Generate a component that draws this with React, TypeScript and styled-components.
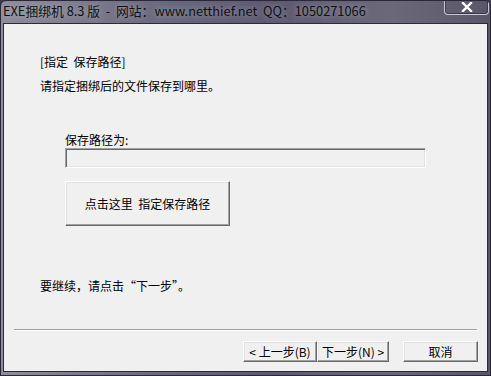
import React from "react";
import styled, { createGlobalStyle } from "styled-components";

const GlobalStyle = createGlobalStyle`
  html, body {
    margin: 0;
    padding: 0;
    background: #3c3a4c;
  }
  body {
    font-family: "Noto Sans CJK SC", "DejaVu Sans", sans-serif;
    font-size: 12px;
    color: #000;
  }
`;

// Aero-like outer window frame
const Window = styled.div`
  width: 491px;
  height: 376px;
  box-sizing: border-box;
  display: flex;
  flex-direction: column;
  background: linear-gradient(90deg, #8f8d99 0%, #6f6d80 28%, #5d5a70 55%, #6b6979 80%, #585668 100%);
  border: 1px solid #2a2838;
  border-radius: 6px 6px 0 0;
  overflow: hidden;
`;

const TitleBar = styled.div`
  height: 22px;
  flex: none;
  display: flex;
  align-items: flex-start;
  padding-left: 2px;
`;

const Title = styled.span`
  font-family: "Noto Sans CJK SC", "Open Sans", sans-serif;
  font-size: 12.8px;
  line-height: 20px;
  color: #111;
  white-space: pre;
  text-shadow: 0 0 6px rgba(230, 230, 240, 0.55);
`;

const CloseButton = styled.div`
  margin-left: auto;
  margin-right: 1px;
  margin-top: -2px;
  width: 45px;
  height: 16px;
  box-sizing: border-box;
  border: 1px solid #c8c6d2;
  border-top: none;
  border-radius: 0 0 4px 4px;
  box-shadow: inset 0 0 0 1px rgba(40, 38, 55, 0.6);
  display: flex;
  align-items: center;
  justify-content: center;
`;

const Client = styled.div`
  flex: 1;
  margin: 0 2px 3px 2px;
  background: #f0f0f0;
  border: 1px solid #2c2a3a;
  display: flex;
  flex-direction: column;
`;

const Content = styled.div`
  display: flex;
  flex-direction: column;
  padding-left: 36px;
`;

const Line = styled.div<{ $top: number }>`
  margin-top: ${(p) => p.$top}px;
  line-height: 16px;
  height: 16px;
  white-space: pre;
`;

const PathGroup = styled.div`
  margin-left: 25px;
  display: flex;
  flex-direction: column;
`;

const PathInput = styled.div`
  width: 361px;
  height: 20px;
  box-sizing: border-box;
  background: #f0f0f0;
  border-top: 1px solid #a0a0a0;
  border-left: 1px solid #a0a0a0;
  border-right: 1px solid #ffffff;
  border-bottom: 1px solid #ffffff;
  box-shadow: inset 1px 1px 0 #696969, inset -1px -1px 0 #e3e3e3;
`;

const BigButton = styled.div`
  margin-top: 13px;
  width: 165px;
  height: 45px;
  box-sizing: border-box;
  background: #f0f0f0;
  border-top: 1px solid #ffffff;
  border-left: 1px solid #ffffff;
  border-right: 1px solid #696969;
  border-bottom: 1px solid #696969;
  box-shadow: inset -1px -1px 0 #a0a0a0, inset 1px 1px 0 #e3e3e3;
  display: flex;
  align-items: center;
  justify-content: center;
  white-space: pre;
`;

const Separator = styled.div`
  margin: 35px 10px 0 10px;
  height: 1px;
  background: #a0a0a0;
  border-bottom: 1px solid #ffffff;
`;

const ButtonRow = styled.div`
  display: flex;
  justify-content: flex-end;
  padding: 10px 9px 0 0;
`;

const NavButton = styled.div<{ $w: number; $gap?: number }>`
  width: ${(p) => p.$w}px;
  height: 21px;
  margin-left: ${(p) => p.$gap ?? 0}px;
  box-sizing: border-box;
  background: #f0f0f0;
  border-top: 1px solid #ffffff;
  border-left: 1px solid #ffffff;
  border-right: 1px solid #696969;
  border-bottom: 1px solid #696969;
  box-shadow: inset -1px -1px 0 #a0a0a0, inset 1px 1px 0 #e3e3e3;
  display: flex;
  align-items: center;
  justify-content: center;
  line-height: 14px;
  white-space: pre;
`;

const App: React.FC = () => (
  <>
    <GlobalStyle />
    <Window>
      <TitleBar>
        <Title>{"EXE捆绑机 8.3 版  -  网站：www.netthief.net  QQ：1050271066"}</Title>
        <CloseButton>
          <svg width="12" height="10" viewBox="0 0 12 10">
            <path d="M2 1 L10 9 M10 1 L2 9" stroke="#ffffff" strokeWidth="2.4" strokeLinecap="square" />
          </svg>
        </CloseButton>
      </TitleBar>
      <Client>
        <Content>
          <Line $top={30}>{"[指定  保存路径]"}</Line>
          <Line $top={8}>请指定捆绑后的文件保存到哪里。</Line>
          <PathGroup>
            <Line $top={38}>保存路径为:</Line>
            <PathInput />
            <BigButton>{"点击这里  指定保存路径"}</BigButton>
          </PathGroup>
          <Line $top={52}>要继续，请点击“下一步”。</Line>
        </Content>
        <Separator />
        <ButtonRow>
          <NavButton $w={74}>{"< 上一步(B)"}</NavButton>
          <NavButton $w={72}>{"下一步(N) >"}</NavButton>
          <NavButton $w={75} $gap={14}>取消</NavButton>
        </ButtonRow>
      </Client>
    </Window>
  </>
);

export default App;
